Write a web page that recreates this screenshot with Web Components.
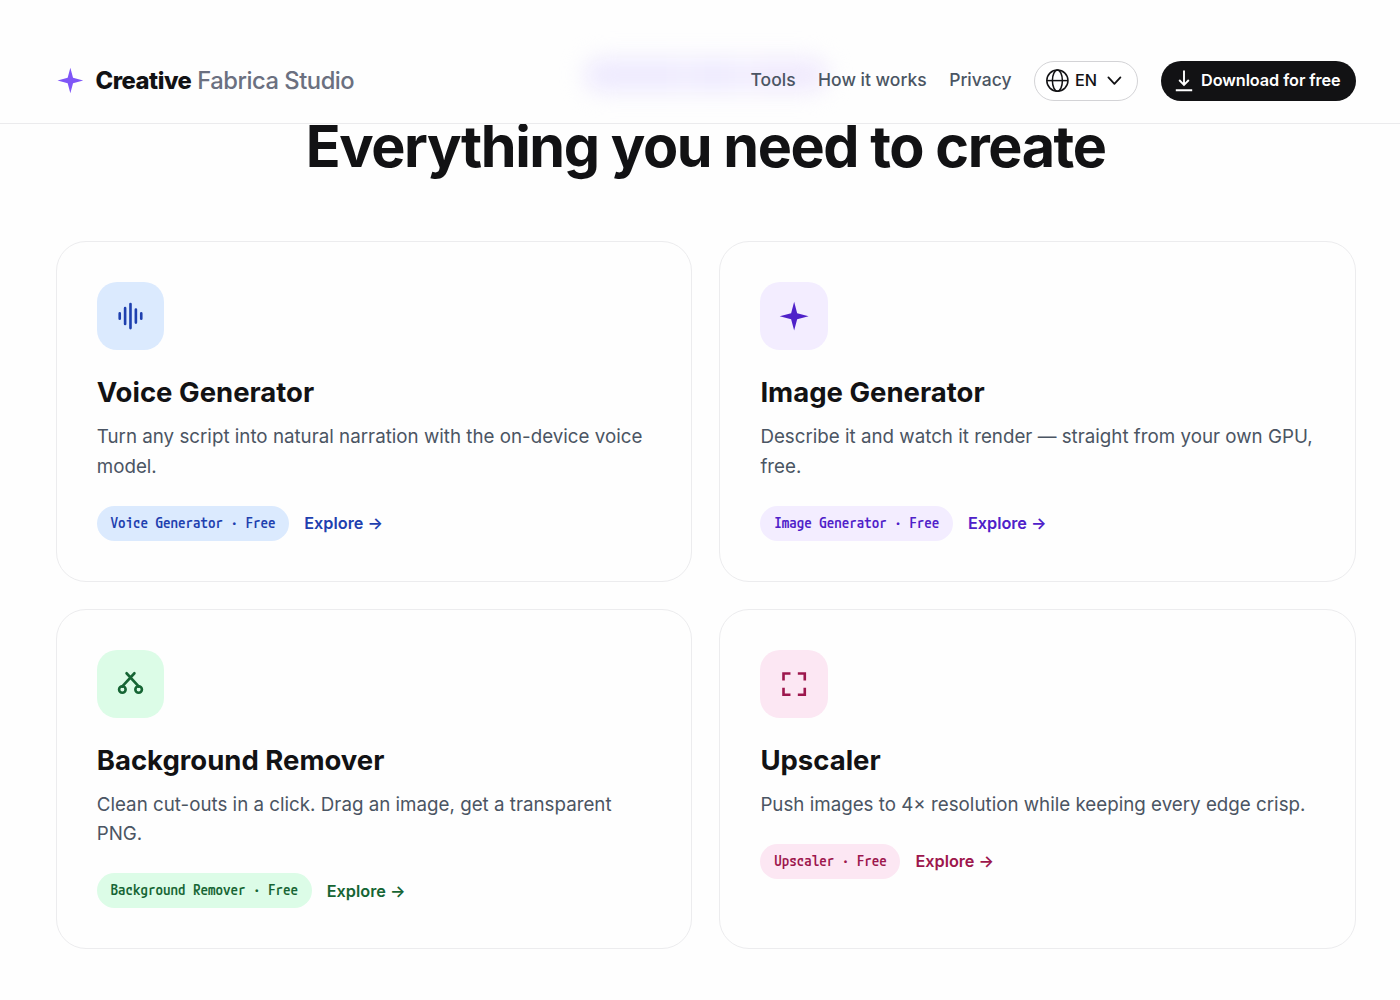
<!DOCTYPE html>
<html lang="en">
<head>
<meta charset="utf-8">
<title>Creative Fabrica Studio</title>
<style>
 html, body {
  margin: 0;
  height: 100%;
  overflow: hidden;
 }

 body {
  background: #fefefe;
  color: #121214;
  font-family: Inter, 'Liberation Sans', sans-serif;
 }
</style>
</head>
<body>
<studio-page>
 <studio-header slot="header">
  <nav-link>Tools</nav-link>
  <nav-link>How it works</nav-link>
  <nav-link>Privacy</nav-link>
  <language-picker>EN</language-picker>
  <download-button>Download for free</download-button>
 </studio-header>
 <span slot="title">Everything you need to create</span>
 <tool-card theme="blue" icon="voice" name="Voice Generator">Turn any script into natural narration with the on-device voice model.</tool-card>
 <tool-card theme="violet" icon="star" name="Image Generator">Describe it and watch it render — straight from your own GPU, free.</tool-card>
 <tool-card theme="green" icon="scissors" name="Background Remover">Clean cut-outs in a click. Drag an image, get a transparent PNG.</tool-card>
 <tool-card theme="pink" icon="expand" name="Upscaler">Push images to 4× resolution while keeping every edge crisp.</tool-card>
</studio-page>

<script>
const STAR = '<path fill="currentColor" stroke="none" d="M12 1l2.3 8.7L23 12l-8.7 2.3L12 23l-2.3-8.7L1 12l8.7-2.3z"/>';

const ICONS = {
 star: '<g transform="translate(.3 .3)">' + STAR + '</g>',
 voice: '<path stroke-linecap="round" d="M3.6 10.2v4M7.7 6.2v12M11.8 3v18.4M15.9 7.2v10M20 10.2v4"/>',
 scissors: '<g stroke-linecap="round"><circle cx="5.6" cy="16.4" r="2.5"/><circle cx="18" cy="16.4" r="2.5"/><path d="M8.8 4l9.4 10.2M14.8 4L5.4 14.2"/></g>',
 expand: '<path d="M4.2 9.5V4.2h5.3M15.1 4.2h5.3v5.3M20.4 15.1v5.3h-5.3M9.5 20.4H4.2v-5.3"/>'
};

const THEMES = {
 blue: { ink: '#1e40af', tint: '#dbeafe' },
 violet: { ink: '#4f21c9', tint: '#f3edff' },
 green: { ink: '#166534', tint: '#dcfce7' },
 pink: { ink: '#9d174d', tint: '#fce7f3' }
};

class StudioPage extends HTMLElement {
 constructor() {
  super();
  this.attachShadow({ mode: 'open' });
  this.shadowRoot.innerHTML = `
   <style>
   :host {
    display: block;
   }

   main {
    padding: 0 44.5px 0 55.75px;
   }

   h2 {
    margin: -8.75px 0 62.85px;
    font-size: 57.5px;
    line-height: 63.25px;
    font-weight: 700;
    letter-spacing: -0.025em;
    text-align: center;
   }

   .grid {
    display: grid;
    grid-template-columns: 1fr 1fr;
    gap: 27.5px;
   }
   </style>
   <slot name="header"></slot>
   <main>
    <h2><slot name="title"></slot></h2>
    <div class="grid"><slot></slot></div>
   </main>
  `;
 }
}

class StudioHeader extends HTMLElement {
 constructor() {
  super();
  this.attachShadow({ mode: 'open' });
  this.shadowRoot.innerHTML = `
   <style>
   :host {
    display: flex;
    position: relative;
    z-index: 1;
    box-sizing: border-box;
    height: 124px;
    padding: 37px 44px 0 56px;
    align-items: center;
    justify-content: space-between;
    background: #fefefe;
    border-bottom: 1px solid #ebebed;
   }

   .brand {
    display: flex;
    align-items: center;
    gap: 11.5px;
    font-size: 23.75px;
    font-weight: 500;
    letter-spacing: -0.02em;
    color: #6b7080;
   }

   .brand svg {
    width: 28px;
    height: 28px;
    color: #7f56f7;
   }

   b {
    font-weight: 800;
    color: #121214;
   }

   nav {
    display: flex;
    position: relative;
    align-items: center;
    gap: 22.5px;
   }

   .glow {
    position: absolute;
    left: 584px;
    top: 58px;
    width: 244px;
    height: 34px;
    border-radius: 17px;
    background: linear-gradient(90deg, #eeeafe 0 38%, #f3f0fe 41%, #eeeafe 46% 60%, #f4f1fe 65%, #f0eafd 72%);
    filter: blur(11px);
   }
   </style>
   <div class="glow"></div>
   <div class="brand">
    <svg viewBox="-.3 -.4 24 24">${STAR}</svg>
    <span><b>Creative</b> Fabrica Studio</span>
   </div>
   <nav><slot></slot></nav>
  `;
 }
}

class NavLink extends HTMLElement {
 constructor() {
  super();
  this.attachShadow({ mode: 'open' });
  this.shadowRoot.innerHTML = `
   <style>
   :host {
    margin-bottom: 1.5px;
    font-size: 17.5px;
    font-weight: 500;
    line-height: 27px;
    color: #4b5563;
    white-space: nowrap;
   }
   </style>
   <slot></slot>
  `;
 }
}

class LanguagePicker extends HTMLElement {
 constructor() {
  super();
  this.attachShadow({ mode: 'open' });
  this.shadowRoot.innerHTML = `
   <style>
   :host {
    display: flex;
    box-sizing: border-box;
    width: 104px;
    height: 40px;
    margin: 2px 0.5px 0 0;
    padding: 0 15px 2px 10px;
    align-items: center;
    border: 1px solid #d3d3d6;
    border-radius: 20px;
    background: #fff;
    font-size: 16.25px;
    font-weight: 500;
   }

   svg {
    margin-top: 1px;
    fill: none;
    stroke: currentColor;
   }

   .globe {
    width: 24px;
    height: 24px;
    margin-right: 6px;
    stroke-width: 1.5;
   }

   .chevron {
    width: 16px;
    height: 16px;
    margin-left: auto;
    stroke-width: 1.8;
   }
   </style>
   <svg class="globe" viewBox="-.4 .4 24 24"><circle cx="12" cy="12" r="10.6"/><ellipse cx="12" cy="12" rx="5" ry="10.6"/><path d="M1.4 12h21.2"/></svg>
   <slot></slot>
   <svg class="chevron" viewBox="-.4 .4 16 16" stroke-linecap="round" stroke-linejoin="round"><path d="M2 4.8l6 6.4 6-6.4"/></svg>
  `;
 }
}

class DownloadButton extends HTMLElement {
 constructor() {
  super();
  this.attachShadow({ mode: 'open' });
  this.shadowRoot.innerHTML = `
   <style>
   :host {
    display: flex;
    box-sizing: border-box;
    width: 195px;
    height: 40px;
    margin-top: 2px;
    padding: 0 0 2px 13.5px;
    align-items: center;
    gap: 8.5px;
    border-radius: 20px;
    background: #121214;
    color: #fff;
    font-size: 16.25px;
    font-weight: 600;
    letter-spacing: -0.07px;
    white-space: nowrap;
   }

   svg {
    width: 18px;
    height: 24px;
    margin-top: 1px;
    fill: none;
    stroke: currentColor;
    stroke-width: 1.9;
   }
   </style>
   <svg viewBox="0 0 18 24"><path d="M9 1.6v14M4.2 11L9 15.8l4.8-4.8M.8 21.2h16.4"/></svg>
   <slot></slot>
  `;
 }
}

class ToolCard extends HTMLElement {
 constructor() {
  super();
  this.attachShadow({ mode: 'open' });
 }

 connectedCallback() {
  this.render();
 }

 render() {
  const name = this.getAttribute('name');
  const theme = THEMES[this.getAttribute('theme')];

  this.shadowRoot.innerHTML = `
   <style>
   :host {
    display: block;
    padding: 40px;
    border: 1px solid #ececee;
    border-radius: 30px;
    background: #fefefe;
   }

   .icon {
    display: flex;
    width: 67.5px;
    height: 67.5px;
    align-items: center;
    justify-content: center;
    border-radius: 20px;
    background: ${theme.tint};
    color: ${theme.ink};
   }

   .icon svg {
    width: 31.5px;
    height: 31.5px;
    fill: none;
    stroke: currentColor;
    stroke-width: 2;
   }

   h3 {
    margin: 25.4px 0 12.57px;
    font-size: 27.5px;
    line-height: 34.4px;
    font-weight: 700;
   }

   p {
    margin: 0;
    font-size: 18.75px;
    line-height: 29.3px;
    color: #4b5563;
   }

   .foot {
    display: flex;
    height: 35px;
    margin-top: 24.73px;
    align-items: center;
    gap: 15px;
    color: ${theme.ink};
   }

   .tag {
    padding: 0 13.75px 1.5px;
    border-radius: 18px;
    background: ${theme.tint};
    font-family: 'M PLUS 1 Code', 'Noto Sans Mono CJK JP', monospace;
    font-size: 15px;
    font-weight: 500;
    line-height: 33.5px;
    white-space: pre;
   }

   /* keeps the middle dot in one cell of its own */
   .dot {
    display: inline-block;
    width: 7.5px;
    letter-spacing: 7.5px;
   }

   .more {
    font-size: 16.25px;
    font-weight: 600;
   }
   </style>
   <div class="icon"><svg viewBox="0 0 24 24">${ICONS[this.getAttribute('icon')]}</svg></div>
   <h3>${name}</h3>
   <p><slot></slot></p>
   <div class="foot">
    <span class="tag">${name} <span class="dot">·</span> Free</span>
    <span class="more">Explore →</span>
   </div>
  `;
 }
}

// Register the custom elements
customElements.define('nav-link', NavLink);
customElements.define('language-picker', LanguagePicker);
customElements.define('download-button', DownloadButton);
customElements.define('studio-header', StudioHeader);
customElements.define('tool-card', ToolCard);
customElements.define('studio-page', StudioPage);
</script>
</body>
</html>
